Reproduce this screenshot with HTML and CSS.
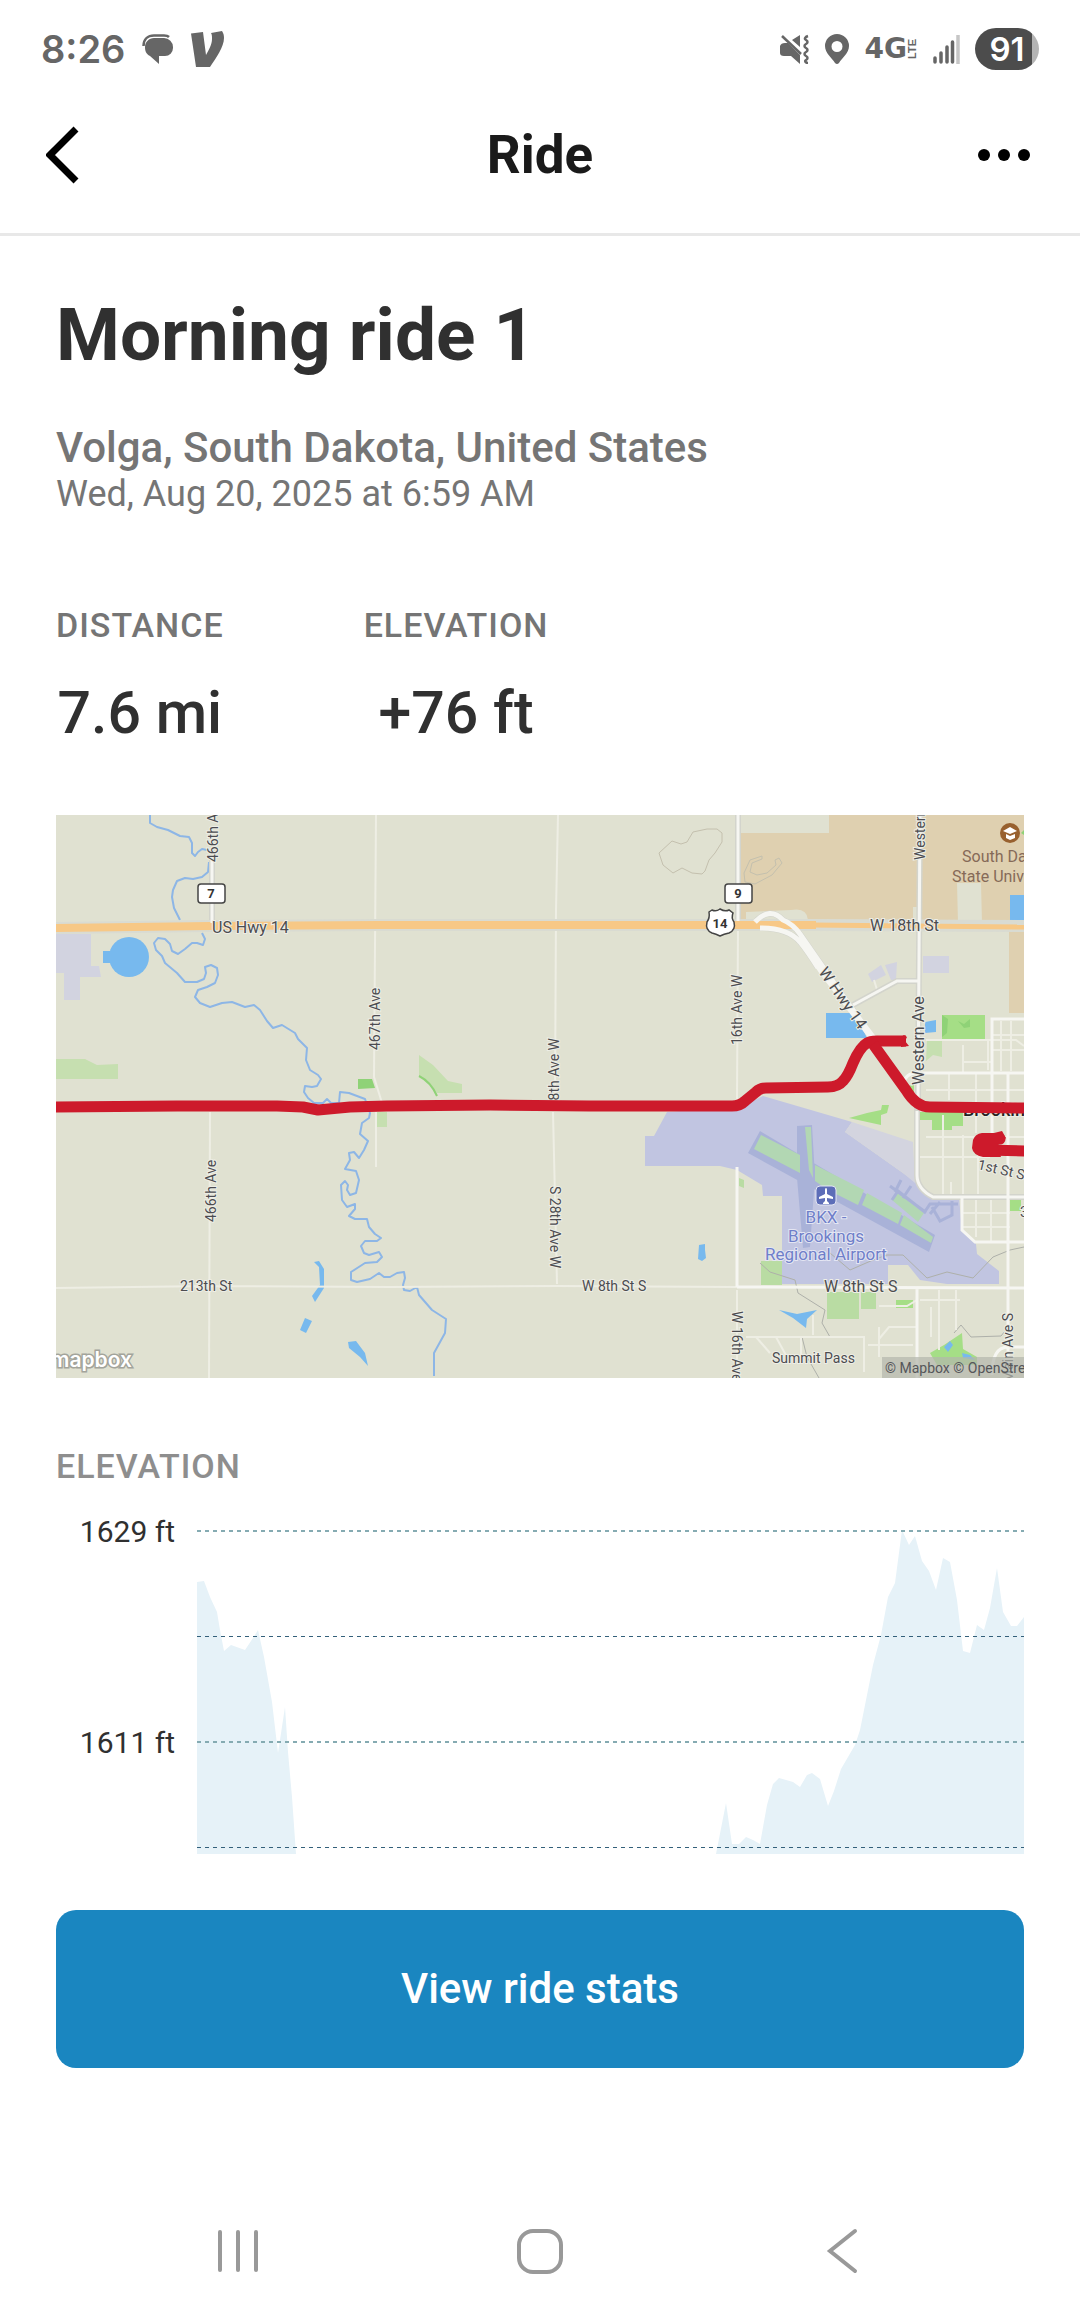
FILE: index.html
```html
<!DOCTYPE html>
<html lang="en">
<head>
<meta charset="utf-8">
<meta name="viewport" content="width=device-width, initial-scale=1">
<title>Ride</title>
<link rel="stylesheet" href="styles.css">
</head>
<body>
<div class="status">
  <div class="status-group status-left">
    <span class="clock">8:26</span>
    <svg width="32" height="32" viewBox="0 0 32 32" aria-hidden="true">
      <path class="ico" d="M12 5h10a9 9 0 0 1 9 9v1a8 8 0 0 1-8 8h-6v8l-9-8c-4-2-5-5-5-9 0-5 4-9 9-9z"/>
      <path d="M1.500 13C1.500 6 6 2.500 12 2.500h10c2 0 4 .5 5 1.500" fill="none" stroke="#666" stroke-width="2.500"/>
    </svg>
    <svg width="34" height="36" viewBox="0 0 34 36" aria-hidden="true">
      <path class="ico" d="M0 2.500 12 1l3 23c3-5 6-11 6-16 0-3 0-4-1-6L31 0c1.500 2.500 2 4 2 7 0 9-8 20-14 29H5z"/>
    </svg>
  </div>
  <div class="status-group">
    <svg width="30" height="30" viewBox="0 0 30 30" aria-hidden="true">
      <path class="ico" d="M1 12q1-3 5-3h3l12 12v9l-9-8H5q-4 0-4-3zM13 6l8-5v12z"/>
      <path d="M3 2l19 18" stroke="#666" stroke-width="2.500"/>
      <path d="M29 2c-3 1-4 3-2 4s2 3 0 4-2 3 0 4 2 3 0 4-2 3 0 4 2 3 0 4 0 3 2 3" fill="none" stroke="#666" stroke-width="2.500"/>
    </svg>
    <svg width="26" height="30" viewBox="0 0 26 30" aria-hidden="true">
      <path class="ico" fill-rule="evenodd" d="M13 0a12 12 0 0 1 12 12c0 7-7 12-10 17q-2 2-4 0C8 24 1 19 1 12A12 12 0 0 1 13 0zm0 7a5.500 5.500 0 1 0 0 11 5.500 5.500 0 0 0 0-11z"/>
    </svg>
    <span class="network"><span>4G</span><span class="lte">LTE</span></span>
    <svg width="28" height="30" viewBox="0 0 28 30" aria-hidden="true">
      <path d="M3 28v-4M9 28v-9M15 28V13M20.500 28V8" stroke="#666" stroke-width="3.500" stroke-linecap="round"/>
      <path d="M26 30V1" stroke="#c6c6c6" stroke-width="3.500"/>
    </svg>
    <span class="battery">91</span>
  </div>
</div>

<header class="header">
  <button class="icon-btn header-back" type="button" aria-label="Back">
    <svg width="36" height="60" viewBox="0 0 36 60"><path d="M30 4 4 30l26 26" fill="none" stroke="#000" stroke-width="7"/></svg>
  </button>
  <div class="header-title">Ride</div>
  <button class="icon-btn" type="button" aria-label="More options">
    <svg width="56" height="16" viewBox="0 0 56 16"><circle cx="6" cy="8" r="6"/><circle cx="26" cy="8" r="6"/><circle cx="46" cy="8" r="6"/></svg>
  </button>
</header>

<main class="main">
  <h1 class="title">Morning ride 1</h1>
  <p class="place">Volga, South Dakota, United States</p>
  <p class="date">Wed, Aug 20, 2025 at 6:59 AM</p>

  <dl class="stats">
    <div class="stat"><dt class="label">DISTANCE</dt><dd class="value">7.6 mi</dd></div>
    <div class="stat"><dt class="label">ELEVATION</dt><dd class="value">+76 ft</dd></div>
  </dl>

  <svg class="map" viewBox="0 0 968 563" role="img" aria-label="Map of the ride">
    <rect width="968" height="563" fill="#e0e1d1"/>

    <!-- land use -->
    <path fill="#dfd0b0" d="M683 18H773V0H968V198H953V114H683z"/>
    <path fill="#e0e1d1" d="M901 68h24l1 40h-24zM857 92h5v18h-5zM690 97l45-2q16-3 17 10h-62z"/>
    <path fill="#d2d3e0" d="M0 119h35v32h8l2 11H24v23H8v-27H0zM867 141h26v17h-26zM812 159l13-9 5 10-14 7zM829 150l12-3-1 18h-5z"/>
    <path fill="#c6dfb0" d="M0 244h29l12 6 21-1v15H0zM321 297h10v15h-10zM363 240l14 10 15 16 14 3v9h-25l-10-13-8-4zM871 225h15v17l-9-2-7 6z"/>
    <path fill="#8fd277" d="M302 264h14l3 9-17 1z"/>
    <path d="M363 261q12 6 18 20" fill="none" stroke="#8fd277" stroke-width="2"/>
    <path fill="#a5de86" d="M886 200h43v25h-43zM864 297h43v14h-11v4h-20v-10h-12zM793 303l18-5 14-3 1-5h7l-2 8-6 2v10zM848 275q3-5 10-5v15zM954 385h11v11h-11zM840 485h17v8h-17zM874 538l14-8 18-12 1 16 14 8v8h-40z"/>
    <path fill="#8fd277" d="M886 200l6 4-1 14-5 4zM902 206l6 3 6-5v8l-6 1z"/>
    <path fill="#b9dca3" d="M705 446h21v24h-21zM771 477h32v27h-32zM805 477h15v17h-15zM683 363l5 2v8l-5-2z"/>

    <!-- airport -->
    <path fill="#c1c5e1" d="M611 297l-13 24h-9v30h75l17 4 25 15 1 11h19v88h106v-19h20l12 15 27 4h52v-13l-22-17-1-10-14-13-3-34h-26l-16-14-14-10-58-41 7-10-89-26-21 10z"/>
    <path fill="#d3d4df" d="M796 307l61 20 2 41-12-10-58-41z"/>
    <path fill="#a9b2d8" d="M704 316l175 104-6 17-181-99zM741 311l15-1 3 52-5 70-7 1-6-70z"/>
    <path fill="#b2d7b3" d="M705 320l39 20v18l-46-24zM749 312h6l2 51-4-8zM759 350l49 25-6 15-30-15-13-9zM811 378l35 20-4 11-36-19zM848 400l29 22-2 6-31-18zM842 378l26 20-6 9-26-22z"/>
    <path d="M834 371l34 25M845 365l-6 12M855 371l-8 12M836 385l6-9 28 22M868 398l6-9 28 0M876 392l8 14 12-6V386M884 387l-10 12" fill="none" stroke="#a9b2d8" stroke-width="3"/>

    <!-- water -->
    <g fill="#77b9ee">
      <circle cx="73" cy="142" r="20"/>
      <path d="M47 136h9v12h-9zM770 198h29l12 25h-41zM869 207l11-2v12l-11 1zM954 80h14v26h-14zM643 430l6-1v6l1 8-4 3-4-2zM258 447l5-1 5 8v19l-9 14-3-6 8-11-1-18zM249 503l7 3-6 12-6-3zM292 527l8-1 9 12 3 13-8-9-11-9zM723 495l18 4 20-4-10 9-1 9-13-10zM888 532l6-6 3 4-5 7zM906 538l8 2 5 5-12-2z"/>
    </g>
    <g fill="none" stroke="#8db6e6" stroke-width="2" stroke-linejoin="round">
      <path d="M94 0v8l7 4 11 3 12 6 9 1 3 6v10l3 3 3-4 4-3 5 1M153 47l-1 10-6 5-9 2-8-1-8 3-4 9-1 7 2 11 6 12"/>
      <path d="M146 118l3 6-2 6-6-2h-5l-7 6-7 5-6-3-2-7-5-5-7-1-4 5 2 7 6 6 3 7 12 10 8 9h12l7-3 2-6-1-6 6-2 6 3 1 7-3 8-8 4-9 3-3 7 5 6 10 4 12-4 10-1 13 5 9-2 6 5 7 11 6 7 9-3 13 8 3 6 9 9-1 12 4 10 8 5 3 4-4 7-5 1-7-1-1 6 4 6 6 5 9 0 4-4 4 4 8 0 1-11 9 1 16 6 5 14-1 5-7 5-2 11 8 7-4 9-5 8-5-6-5 1 1 7-5 9 11 2 3 9-3 13-6 2-3-5 1-5-3-4-4 4 1 15 5 7 8-3v5l-6 7 6 3h12l2 8 6 7 6 4-4 3h-12l-4 5 3 7 5 2 10-3 3 5-5 5-12 1-14 9v8l6 2 13-3 9-6 5 4h6l7-4 7-1 1 6-2 7 1 5 6 1 7-4 2 8 13 15 14 9-1 14-11 20v23"/>
    </g>

    <!-- contours and trails -->
    <g fill="none" stroke="#c4c0ae" stroke-width="1">
      <path d="M603 38l13-12 9 3 6-2 6-10 14-3h10l5 4v9l-7 11-6 7-4 11-3 3-10-1-10-5-9 5-10-8z"/>
      <path d="M706 41l-12 4-6 13 1 9 10 2 17-9 10-12-3-5-4 2 1 5-9 8-10 2-7-3 2-9 10-4z"/>
      <path stroke="#aeb0aa" d="M704 448l10 9 25 8 3 13 27 17-3 13 8 14h-28l5 20 12 21M774 438l20 17 23-10 14-5 16 0 24 23 20-6 26 6 20-21 17-7 14-3M898 518l7-8 10 12 30-1 8-10"/>
    </g>

    <!-- minor roads -->
    <g fill="none" stroke="#eeeee4" stroke-width="2">
      <path d="M154 297l-1 266M320 0l-2 262 8 26M320 297v55M502 0l-2 95-1 190M497 297l4 172M0 473l154-2 180 1 167-1 180 1M682 110l-1 175M681 475v88"/>
      <path d="M870 225h90l8 6M907 230v28M932 225v30M907 247h29M920 258v60M893 258v27M870 275h98M945 206v50M955 206v50M936 220h32M936 235h32M864 342h70M887 300v80M907 320v62M922 340v42M870 322h98M895 382v-15M920 382v40M935 382v45M906 398h48M906 412h48M883 475v60M900 475v40M861 512h-28l-10 12M823 512v30M864 485h40M690 522h118v35M720 522l12 22M700 522l14 16M745 522v25M757 500v20M812 530h45M861 485l-10 6h-28M875 492v30M818 165l4 13"/>
    </g>

    <!-- major roads -->
    <g fill="none" stroke="#d3d4cc" stroke-width="6">
      <path d="M156 45v63M682 0v107M704 113q28 0 40 14 8 10 18 26M699 107q15-16 28-2 10 4 17 14l75 108M797 190l44-24h21M864 0l-2 285M861 285v75q0 14 16 22h91"/>
    </g>
    <path d="M0 113l154-2 170-1H760l208 1" fill="none" stroke="#d9dbd2" stroke-width="12"/>
    <path d="M0 113l154-2 170-1H760" fill="none" stroke="#f7c886" stroke-width="8"/>
    <path d="M755 110l213 2" fill="none" stroke="#f7c886" stroke-width="5"/>
    <g fill="none" stroke="#f6f6f2" stroke-width="4">
      <path d="M156 45v63M682 0v106M864 0l-2 285" stroke-width="3"/>
      <path d="M699 107q15-16 28-2 10 4 17 14l75 108M704 113q28 0 40 14 8 10 18 26" stroke-width="5"/>
      <path d="M744 122l22 34 53 70" stroke-width="7"/>
      <path d="M797 190l44-24h21M861 296v64q0 14 16 22h91M936 258v-54h32M846 270q4-12 14-12h108M952 258v305M906 383v32l13 12h49M681 352v120M681 472l287 1M861 472v91M936 258v60M936 560q0-28 16-28h16" stroke-width="3"/>
    </g>

    <!-- labels under the route -->
    <g class="street halo">
      <text transform="translate(503 223) rotate(-90)" text-anchor="end">28th Ave W</text>
      <text class="town" x="907" y="301">Brookings</text>
    </g>

    <!-- route -->
    <g fill="none" stroke="#cd1a2b" stroke-width="11" stroke-linejoin="round">
      <path d="M0 292l121-1h100l26 1 15 3 32-3 37-1 103-1 100 1h142q8 0 13-5l11-9q4-4 10-4l62-1q10 0 15-6 5-5 10-18 7-16 14-20 3-2 10-2h29"/>
      <path d="M817 229l33 46q10 17 24 17l94 1"/>
      <path d="M968 336l-40-1q-5-6 2-11h14" stroke-linecap="round"/>
    </g>
    <path fill="#cd1a2b" d="M848 220l3 2-2 4 4 5-8 1v-10z"/>
    <path fill="#cd1a2b" d="M917 325q2-6 9-7h12l8-2 4 7-9 8 4 11h-18q-10-2-11-9z"/>

    <!-- road shields -->
    <g fill="#fff" stroke="#444" stroke-width="1.500">
      <rect x="142" y="69" width="27" height="19" rx="3"/>
      <rect x="669" y="69" width="27" height="19" rx="3"/>
      <path d="M653 97l3-2q4 2 8-1 5 3 9 1l4 3q-2 5 1 9 2 8-5 11-5 1-9 3-4-2-8-3-7-3-5-11 3-4 2-10z"/>
    </g>
    <g class="shield">
      <text x="155" y="83">7</text>
      <text x="682" y="83">9</text>
      <text x="664" y="113">14</text>
    </g>

    <!-- street labels -->
    <g class="street halo">
      <text class="big" x="156" y="118">US Hwy 14</text>
      <text class="big" x="814" y="116">W 18th St</text>
      <text class="big" x="768" y="477">W 8th St S</text>
      <text x="526" y="476">W 8th St S</text>
      <text x="124" y="476">213th St</text>
      <text transform="translate(162 47) rotate(-90)">466th Ave</text>
      <text transform="translate(160 407) rotate(-90)">466th Ave</text>
      <text transform="translate(324 235) rotate(-90)">467th Ave</text>
      <text transform="translate(494 371) rotate(90)">S 28th Ave W</text>
      <text transform="translate(686 230) rotate(-90)">16th Ave W</text>
      <text transform="translate(676 496) rotate(90)">W 16th Ave</text>
      <text class="big" transform="translate(868 270) rotate(-90)">Western Ave</text>
      <text transform="translate(869 45) rotate(-90)">Western Ave</text>
      <text class="big" transform="translate(762 157) rotate(55)">W Hwy 14</text>
      <text transform="translate(921 354) rotate(13)">1st St S</text>
      <text x="716" y="548">Summit Pass</text>
      <text x="964" y="402">3rd St S</text>
      <text transform="translate(957 498) rotate(-90)" text-anchor="end">Main Ave S</text>
    </g>
    <g class="street school">
      <text class="big" x="906" y="47">South Dakota</text>
      <text class="big" x="896" y="67">State University</text>
    </g>
    <circle cx="954" cy="18" r="10" fill="#98612f"/>
    <path d="M947 16l7-4 7 4-7 3zM950 19l4 2 5-2v4l-5 2-4-2z" fill="#fff"/>
    <path d="M968 15l-3 3 3 2z" fill="#8fd277"/>

    <rect x="760" y="371" width="20" height="19" rx="4" fill="#5d6db8" stroke="#e4e6f3"/>
    <path d="M770 373q1 0 1 2v4l6 3v2l-6-1v3l2 2v1h-6v-1l2-2v-3l-6 1v-2l6-3v-4q0-2 1-2z" fill="#fff"/>
    <g class="airport" text-anchor="middle">
      <text x="770" y="408">BKX -</text>
      <text x="770" y="427">Brookings</text>
      <text x="770" y="445">Regional Airport</text>
    </g>

    <text class="logo" x="76" y="552" text-anchor="end">mapbox</text>
    <rect x="826" y="542" width="142" height="21" fill="#b4b6ac" fill-opacity=".7"/>
    <text class="credit" x="829" y="558">© Mapbox © OpenStreetMap</text>
  </svg>

  <h2 class="label chart-title">ELEVATION</h2>
  <svg class="chart" viewBox="0 0 968 344" role="img" aria-label="Elevation profile">
    <path fill="#e6f2f8" d="M141 344V72l7-1 6 16 7 15 3 18 4 21 7-6 14 5 8-12 5-8 6 27 8 45 6 51 7-46 3 45 4 45 4 57z"/>
    <path fill="#e6f2f8" d="M660 344l10-51 6 41h7l7-7 7 3 7 4 7-39 6-21 6-6 14 4 7 5 7-12 5-2 8 6 8 27 6-15 7-22 14-24 5-15 13-65 8-30 7-38 7-14 7-53 7 15 6-9 7 25 7 10 7 19 7-32 7 4 7 38 6 51 7 2 7-28 7 5 6-22 7-40 6 44 8 14h6l7-9v237z"/>
    <g stroke-dasharray="4 4">
      <path d="M141 21H968M141 232H968" stroke="#85abb2" stroke-width="2"/>
      <path d="M141 126.500H968M141 337.500H968" stroke="#33607a" stroke-width="1"/>
    </g>
    <g class="axis" text-anchor="end">
      <text x="119" y="32">1629 ft</text>
      <text x="119" y="243">1611 ft</text>
    </g>
  </svg>

  <button class="primary" type="button">View ride stats</button>
</main>

<nav class="nav" aria-label="System">
  <button class="icon-btn" type="button" aria-label="Recent apps">
    <svg width="48" height="48" viewBox="0 0 48 48"><path d="M6 5v38M24 5v38M42 5v38" stroke="#999" stroke-width="4" stroke-linecap="round"/></svg>
  </button>
  <button class="icon-btn" type="button" aria-label="Home">
    <svg width="48" height="48" viewBox="0 0 48 48"><rect x="3" y="4" width="42" height="41" rx="14" fill="none" stroke="#999" stroke-width="4"/></svg>
  </button>
  <button class="icon-btn" type="button" aria-label="Back">
    <svg width="48" height="48" viewBox="0 0 48 48"><path d="M37 4 12 24l25 20" fill="none" stroke="#999" stroke-width="4" stroke-linecap="round"/></svg>
  </button>
</nav>
</body>
</html>
```
FILE: styles.css
```css
* {
  box-sizing: border-box;
}

body {
  margin: 0;
  min-height: 100vh;
  display: flex;
  flex-direction: column;
  background: #fff;
  color: #303030;
  font-family: Roboto, "Liberation Sans", sans-serif;
}

svg {
  display: block;
}

p,
h1,
h2,
dl,
dd {
  margin: 0;
}

.status {
  display: flex;
  justify-content: space-between;
  align-items: center;
  padding: 28px 41px 7px;
  color: #666;
}

.status-group {
  display: flex;
  align-items: center;
  gap: 15px;
}

.status-left {
  gap: 17px;
}

.ico {
  fill: #666;
}

.clock {
  font: 600 38px/42px Inter, Roboto, sans-serif;
}

.network {
  display: flex;
  align-items: center;
  gap: 1px;
  font: 700 28px/32px "DejaVu Sans", sans-serif;
}

.lte {
  writing-mode: vertical-rl;
  transform: rotate(180deg);
  font: 700 11px/9px "Liberation Sans", sans-serif;
}

.battery {
  width: 64px;
  border-radius: 21px;
  background: linear-gradient(90deg, #4c4c4c 57px, #b4b4b4 57px);
  color: #fff;
  font: 600 33px/42px Inter, Roboto, sans-serif;
  text-align: center;
}

.header {
  display: flex;
  justify-content: space-between;
  align-items: center;
  height: 159px;
  padding: 0 46px;
  border-bottom: 3px solid #e8e8e8;
}

.header-back {
  width: 56px;
}

.header-title {
  color: #1a1a1a;
  font-size: 53px;
  font-weight: 700;
  line-height: 64px;
}

.icon-btn {
  padding: 0;
  border: 0;
  background: none;
}

.main {
  padding: 57px 56px 0;
}

.title {
  font-size: 73px;
  font-weight: 700;
  line-height: 84px;
}

.place {
  margin-top: 47px;
  color: #757575;
  font-size: 42px;
  font-weight: 500;
  line-height: 48px;
}

.date {
  color: #757575;
  font-size: 36px;
  line-height: 44px;
}

.stats {
  display: flex;
  gap: 140px;
  margin-top: 89px;
  text-align: center;
}

.label {
  color: #757575;
  font-size: 34px;
  font-weight: 500;
  line-height: 40px;
  letter-spacing: 1px;
}

.value {
  margin-top: 34px;
  font-size: 59px;
  font-weight: 500;
  line-height: 68px;
}

.map {
  width: 100%;
  height: auto;
  margin-top: 68px;
}

.street {
  fill: #4c4c50;
  font-size: 14px;
}

.street .big {
  font-size: 16px;
}

.halo text {
  stroke: #eeeee6;
  stroke-width: 2px;
  paint-order: stroke;
}

.street .town {
  fill: #222;
  font-size: 18px;
  font-weight: 500;
}

.school {
  fill: #866a58;
}

.airport {
  fill: #6f7fc9;
  font-size: 17px;
  stroke: #e4e6f3;
  stroke-width: 2px;
  paint-order: stroke;
}

.shield {
  fill: #333;
  font-size: 13px;
  font-weight: 700;
  text-anchor: middle;
}

.logo {
  fill: #fff;
  stroke: #a3a49b;
  stroke-width: 3px;
  paint-order: stroke;
  font: 600 21px Inter, Roboto, sans-serif;
}

.credit {
  fill: #55565a;
  font-size: 14px;
}

.chart-title {
  margin-top: 68px;
  color: #8e8e8e;
}

.chart {
  width: 100%;
  height: auto;
  margin-top: 24px;
}

.axis {
  fill: #303030;
  font-size: 30px;
}

.primary {
  display: block;
  width: 100%;
  margin-top: 56px;
  padding: 54px 0;
  border: 0;
  border-radius: 20px;
  background: #1a86c0;
  color: #fff;
  font: 500 42px/50px Roboto, "Liberation Sans", sans-serif;
}

.nav {
  display: grid;
  grid-template-columns: repeat(3, 1fr);
  justify-items: center;
  margin-top: auto;
  padding: 32px 87px 41px;
}
```
